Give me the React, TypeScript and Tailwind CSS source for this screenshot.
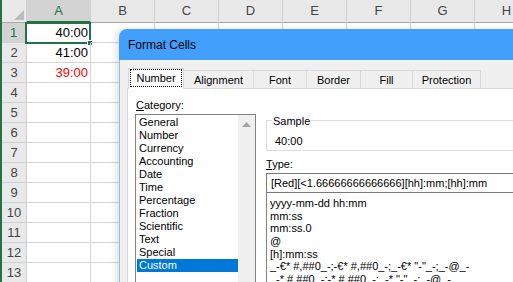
const COLS = ["A", "B", "C", "D", "E", "F", "G", "H"];
const ROWS = [1, 2, 3, 4, 5, 6, 7, 8, 9, 10, 11, 12, 13];

const values: Record<number, { text: string; red?: boolean }> = {
  1: { text: "40:00" },
  2: { text: "41:00" },
  3: { text: "39:00", red: true },
};

const categories = [
  "General",
  "Number",
  "Currency",
  "Accounting",
  "Date",
  "Time",
  "Percentage",
  "Fraction",
  "Scientific",
  "Text",
  "Special",
  "Custom",
];

const types = [
  "yyyy-mm-dd hh:mm",
  "mm:ss",
  "mm:ss.0",
  "@",
  "[h]:mm:ss",
  '_-€* #,##0_-;-€* #,##0_-;_-€* "-"_-;_-@_-',
  '_-* #,##0_-;-* #,##0_-;_-* "-"_-;_-@_-',
];

const tabs = [
  { label: "Number", w: "w-[56px]" },
  { label: "Alignment", w: "w-[71px]" },
  { label: "Font", w: "w-[54px]" },
  { label: "Border", w: "w-[55px]" },
  { label: "Fill", w: "w-[53px]" },
  { label: "Protection", w: "w-[69px]" },
];

function Sheet() {
  return (
    <div className="flex flex-col">
      {/* column headers */}
      <div className="flex h-[23px] bg-[#e9e9e9]">
        <div className="w-[25px] shrink-0 border-r border-b border-r-[#cfcfcf] border-b-[#a8a8a8] flex items-end justify-end pr-[2px] pb-[2px]">
          <svg width="10" height="10" viewBox="0 0 10 10">
            <polygon points="10,0 10,10 0,10" fill="#bdbdbd" />
          </svg>
        </div>
        {COLS.map((c) =>
          c === "A" ? (
            <div
              key={c}
              className="w-[64px] shrink-0 bg-[#d3d3d3] border-r border-r-[#cfcfcf] border-b-2 border-b-[#217346] flex items-center justify-center text-[13px] text-[#217346]"
            >
              {c}
            </div>
          ) : (
            <div
              key={c}
              className="w-[64px] shrink-0 border-r border-b border-r-[#cfcfcf] border-b-[#a8a8a8] flex items-center justify-center text-[13px] text-[#444444]"
            >
              {c}
            </div>
          )
        )}
      </div>

      {/* rows */}
      {ROWS.map((r) => (
        <div key={r} className="flex h-[20px]">
          {r === 1 ? (
            <div className="w-[25px] shrink-0 bg-[#d3d3d3] border-r-2 border-b border-r-[#217346] border-b-[#cfcfcf] flex items-center justify-center text-[13px] text-[#217346]">
              {r}
            </div>
          ) : (
            <div className="w-[25px] shrink-0 bg-[#e9e9e9] border-r border-b border-r-[#cfcfcf] border-b-[#cfcfcf] flex items-center justify-center text-[13px] text-[#444444]">
              {r}
            </div>
          )}
          {COLS.map((c) => (
            <div
              key={c}
              className="relative w-[64px] shrink-0 border-r border-b border-[#d4d4d4] flex items-center justify-end pr-[2px] text-[13px]"
            >
              {c === "A" && values[r] && (
                <span className={values[r].red ? "text-[#ff0000]" : "text-black"}>
                  {values[r].text}
                </span>
              )}
              {c === "A" && r === 1 && (
                <>
                  <div className="absolute left-[-2px] top-[-1px] right-[-1px] bottom-[-2px] border-2 border-[#217346]" />
                  <div className="absolute left-[60px] top-[17px] w-[6px] h-[6px] bg-[#217346] border border-white" />
                </>
              )}
            </div>
          ))}
        </div>
      ))}
    </div>
  );
}

function FormatCells() {
  return (
    <div className="absolute left-[117px] top-[29px] w-[420px] h-[270px] rounded-tl-lg overflow-hidden flex flex-col shadow-[-3px_0_6px_rgba(0,0,0,0.12)]">
      <div className="h-[31px] shrink-0 bg-[#429ffb] flex items-center pl-[9px] text-[12px] text-black">
        Format Cells
      </div>
      <div className="flex-1 flex flex-col bg-[#f0f0f0] border-l border-[#8cc0f4] pl-[7px] pt-[8px] text-[11px] text-black">
        {/* tab strip */}
        <div className="flex items-end h-[20px] pl-[1px]">
          {tabs.map((t, i) =>
            i === 0 ? (
              <div
                key={t.label}
                className={`${t.w} relative z-10 h-[21px] mb-[-1px] shrink-0 bg-white border-l border-t border-r border-[#d9d9d9] px-[1px] pb-[2px]`}
              >
                <div className="h-[18px] border border-dotted border-black flex items-center justify-center pt-[1px]">
                  {t.label}
                </div>
              </div>
            ) : (
              <div
                key={t.label}
                className={`${t.w} h-[18px] shrink-0 bg-[#f0f0f0] border-l border-t border-r border-[#d9d9d9] -ml-px flex items-center justify-center pt-[2px]`}
              >
                {t.label}
              </div>
            )
          )}
        </div>

        {/* tab page */}
        <div className="flex-1 bg-white border border-[#d9d9d9] flex pt-[9px] pl-[7px] gap-[10px]">
          {/* category */}
          <div className="w-[121px] shrink-0 flex flex-col">
            <div className="h-[14px] leading-[14px] pl-[1px]">
              <span className="underline">C</span>ategory:
            </div>
            <div className="mt-[2px] h-[200px] bg-white border border-[#828282] flex">
              <div className="flex-1 pt-[1px] pl-[1px]">
                {categories.map((c) => (
                  <div
                    key={c}
                    className={
                      c === "Custom"
                        ? "h-[13px] leading-[13px] pl-[2px] bg-[#0078d7] text-white"
                        : "h-[13px] leading-[13px] pl-[2px]"
                    }
                  >
                    {c}
                  </div>
                ))}
              </div>
              <div className="w-[17px] shrink-0 bg-[#f0f0f0] flex justify-center pt-[7px]">
                <svg width="9" height="5" viewBox="0 0 9 5">
                  <polygon points="4.5,0 9,5 0,5" fill="#a3a3a3" />
                </svg>
              </div>
            </div>
          </div>

          {/* sample + type */}
          <div className="flex-1 flex flex-col pt-[22px]">
            <div className="relative h-[31px] border border-[#dcdcdc] pl-[8px] pt-[14px] leading-[13px]">
              <span className="absolute left-[5px] top-[-7px] px-[1px] bg-white leading-[14px]">
                Sample
              </span>
              40:00
            </div>
            <div className="mt-[7px] leading-[13px]">
              <span className="underline">T</span>ype:
            </div>
            <div className="mt-[2px] h-[20px] bg-white border border-[#7a7a7a] pl-[4px] leading-[18px] whitespace-nowrap">
              [Red][&lt;1.66666666666666][hh]:mm;[hh]:mm
            </div>
            <div className="h-[120px] bg-white border border-t-0 border-[#828282] pt-[4px] pl-[3px]">
              {types.map((t) => (
                <div key={t} className="h-[12.7px] leading-[12.7px] whitespace-nowrap">
                  {t}
                </div>
              ))}
            </div>
          </div>
        </div>
      </div>
    </div>
  );
}

export default function App() {
  return (
    <div className="relative w-[513px] h-[282px] overflow-hidden bg-white border-l-2 border-[#217346] font-['Liberation_Sans',Arial,sans-serif]">
      <Sheet />
      <FormatCells />
    </div>
  );
}
